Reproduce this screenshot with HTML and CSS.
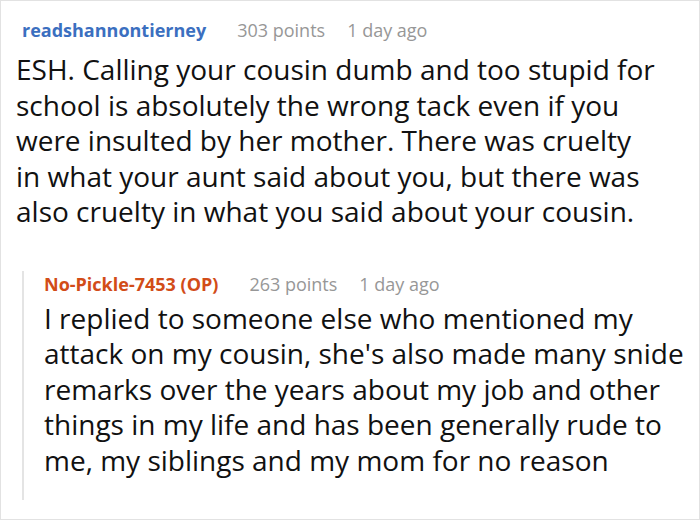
FILE: index.html
```html
<!DOCTYPE html>
<html>
<head>
<meta charset="utf-8">
<link rel="stylesheet" href="styles.css">
</head>
<body>
<div class="frame">
  <div class="comment">
    <div class="meta">
      <span class="author">readshannontierney</span>
      <span class="points">303 points</span>
      <span class="time">1 day ago</span>
    </div>
    <p class="text">ESH. Calling your cousin dumb and too stupid for school is absolutely the wrong tack even if you were insulted by her mother. There was cruelty in what your aunt said about you, but there was also cruelty in what you said about your cousin.</p>
    <div class="reply">
      <div class="meta">
        <span class="author op">No-Pickle-7453 (OP)</span>
        <span class="points">263 points</span>
        <span class="time">1 day ago</span>
      </div>
      <p class="text">I replied to someone else who mentioned my attack on my cousin, she's also made many snide remarks over the years about my job and other things in my life and has been generally rude to me, my siblings and my mom for no reason</p>
    </div>
  </div>
</div>
</body>
</html>
```
FILE: styles.css
```css
html, body {
  margin: 0;
  padding: 0;
  background: #fff;
}
.frame {
  width: 700px;
  height: 520px;
  box-sizing: border-box;
  border: 1px solid #e2e2e2;
  overflow: hidden;
  font-family: "Open Sans", "Noto Sans", sans-serif;
}
.comment {
  padding: 14px 41px 0 15px;
}
.meta {
  display: flex;
  align-items: baseline;
  font-size: 18px;
  line-height: 30px;
  padding-left: 6px;
}
.author {
  font-weight: 700;
  color: #3b6fc0;
  margin-right: 31px;
}
.author.op {
  color: #d24c18;
}
.points, .time {
  color: #979797;
}
.points {
  margin-right: 22px;
}
.text {
  margin: 7px 0 0;
  font-size: 28px;
  line-height: 35.5px;
  color: #111;
}
.reply {
  margin: 41px -37px 0 6px;
  border-left: 2px solid #e4e4e4;
  padding: 0 0 22px 20px;
}
.reply .meta {
  padding-left: 0;
  line-height: 26px;
}
.reply .text {
  margin-top: 4px;
}
```
